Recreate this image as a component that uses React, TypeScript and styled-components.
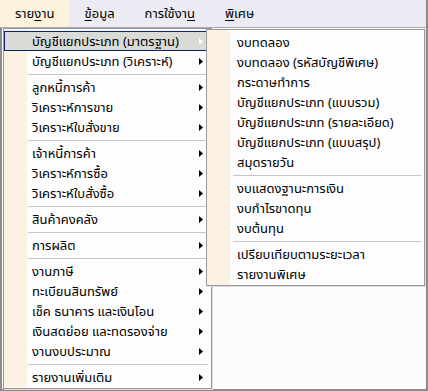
import React from "react";
import styled, { createGlobalStyle } from "styled-components";

const GlobalStyle = createGlobalStyle`
  html, body {
    margin: 0;
    padding: 0;
    background: #fcfcfc;
  }
  body {
    font-family: Tahoma, "Noto Sans Thai", "Noto Sans Thai UI", Loma, Garuda, "Noto Sans", sans-serif;
    font-size: 13px;
    color: #000;
  }
`;

const Window = styled.div`
  position: relative;
  width: 428px;
  height: 391px;
  box-sizing: border-box;
  border-right: 2px solid #8c8c8c;
  display: flex;
  flex-direction: column;
  overflow: hidden;
`;

const MenuBar = styled.div`
  display: flex;
  height: 27px;
  flex: none;
  background: #ecebf3;
  border-bottom: 1px solid #a8a8ae;
`;

const MenuBarItem = styled.div<{ $active?: boolean }>`
  display: flex;
  align-items: center;
  padding: 0 15px;
  background: ${(p) => (p.$active ? "#fcf3de" : "transparent")};

  u {
    text-decoration: underline;
    text-underline-offset: 2px;
  }
`;

const Client = styled.div`
  flex: 1;
  background: #fcfcfc;
  border-left: 2px solid #8c8c8c;
  border-bottom: 2px solid #8c8c8c;
`;

const Popup = styled.ul<{ $left: number; $top: number; $width: number }>`
  position: absolute;
  left: ${(p) => p.$left}px;
  top: ${(p) => p.$top}px;
  width: ${(p) => p.$width}px;
  box-sizing: border-box;
  margin: 0;
  padding: 2px 0 1px;
  list-style: none;
  border: 1px solid #9a9a9a;
  box-shadow: 1px 1px 0 #dcdcdc;
  background: linear-gradient(to right, #fcf2e3 0 23px, #fdfdfd 23px);
`;

const Row = styled.li<{ $selected?: boolean; $indent: number }>`
  display: flex;
  align-items: center;
  height: 20px;
  box-sizing: border-box;
  padding-left: ${(p) => p.$indent - 1}px;
  padding-top: 1px;
  border: 1px solid ${(p) => (p.$selected ? "#0a246a" : "transparent")};
  background: ${(p) => (p.$selected ? "#d9dbd7" : "transparent")};
  white-space: nowrap;
`;

const Label = styled.span`
  flex: 1;
`;

const Arrow = styled.svg<{ $light?: boolean }>`
  width: 4px;
  height: 7px;
  margin-right: 7px;
  fill: ${(p) => (p.$light ? "#ffffff" : "#000000")};
`;

const Separator = styled.li<{ $indent: number }>`
  height: 6px;
  display: flex;
  align-items: center;
  margin-left: ${(p) => p.$indent}px;
  margin-right: 3px;

  &::after {
    content: "";
    flex: 1;
    height: 1px;
    background: #c6c6c6;
  }
`;

type Entry = { label: string; sub?: boolean; selected?: boolean } | "sep";

const mainItems: Entry[] = [
  { label: "บัญชีแยกประเภท (มาตรฐาน)", sub: true, selected: true },
  { label: "บัญชีแยกประเภท (วิเคราะห์)", sub: true },
  "sep",
  { label: "ลูกหนี้การค้า", sub: true },
  { label: "วิเคราะห์การขาย", sub: true },
  { label: "วิเคราะห์ใบสั่งขาย", sub: true },
  "sep",
  { label: "เจ้าหนี้การค้า", sub: true },
  { label: "วิเคราะห์การซื้อ", sub: true },
  { label: "วิเคราะห์ใบสั่งซื้อ", sub: true },
  "sep",
  { label: "สินค้าคงคลัง", sub: true },
  "sep",
  { label: "การผลิต", sub: true },
  "sep",
  { label: "งานภาษี", sub: true },
  { label: "ทะเบียนสินทรัพย์", sub: true },
  { label: "เช็ค ธนาคาร และเงินโอน", sub: true },
  { label: "เงินสดย่อย และทดรองจ่าย", sub: true },
  { label: "งานงบประมาณ", sub: true },
  "sep",
  { label: "รายงานเพิ่มเติม", sub: true },
];

const subItems: Entry[] = [
  { label: "งบทดลอง" },
  { label: "งบทดลอง (รหัสบัญชีพิเศษ)" },
  { label: "กระดาษทำการ" },
  { label: "บัญชีแยกประเภท (แบบรวม)" },
  { label: "บัญชีแยกประเภท (รายละเอียด)" },
  { label: "บัญชีแยกประเภท (แบบสรุป)" },
  { label: "สมุดรายวัน" },
  "sep",
  { label: "งบแสดงฐานะการเงิน" },
  { label: "งบกำไรขาดทุน" },
  { label: "งบต้นทุน" },
  "sep",
  { label: "เปรียบเทียบตามระยะเวลา" },
  { label: "รายงานพิเศษ" },
];

const MenuList: React.FC<{
  items: Entry[];
  left: number;
  top: number;
  width: number;
  indent: number;
}> = ({ items, left, top, width, indent }) => (
  <Popup $left={left} $top={top} $width={width}>
    {items.map((it, i) =>
      it === "sep" ? (
        <Separator key={i} $indent={indent - 4} />
      ) : (
        <Row key={i} $selected={it.selected} $indent={indent}>
          <Label>{it.label}</Label>
          {it.sub && (
            <Arrow viewBox="0 0 4 7" $light={it.selected}>
              <polygon points="0,0 4,3.5 0,7" />
            </Arrow>
          )}
        </Row>
      )
    )}
  </Popup>
);

export default function App() {
  return (
    <>
      <GlobalStyle />
      <Window>
        <MenuBar>
          <MenuBarItem $active>
            <span>
              ราย<u>ง</u>าน
            </span>
          </MenuBarItem>
          <MenuBarItem>
            <span>
              <u>ข</u>้อมูล
            </span>
          </MenuBarItem>
          <MenuBarItem>
            <span>
              การใช้งา<u>น</u>
            </span>
          </MenuBarItem>
          <MenuBarItem>
            <span>
              <u>พ</u>ิเศษ
            </span>
          </MenuBarItem>
        </MenuBar>
        <Client />
        <MenuList items={mainItems} left={3} top={28} width={209} indent={28} />
        <MenuList items={subItems} left={206} top={29} width={219} indent={30} />
      </Window>
    </>
  );
}
